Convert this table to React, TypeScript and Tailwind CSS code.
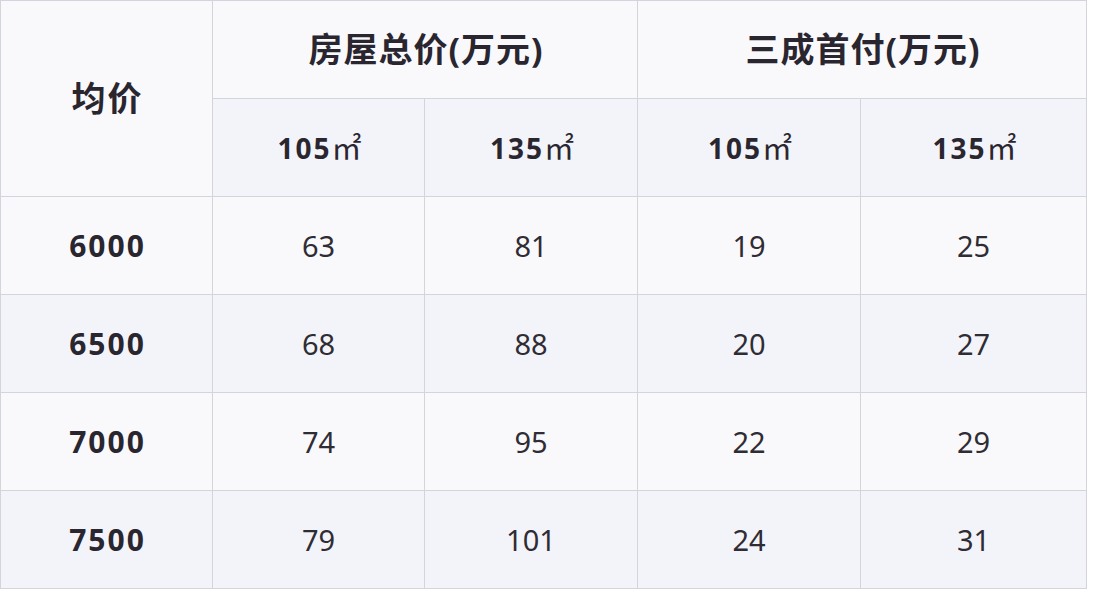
const data = [
  { price: '6000', values: ['63', '81', '19', '25'] },
  { price: '6500', values: ['68', '88', '20', '27'] },
  { price: '7000', values: ['74', '95', '22', '29'] },
  { price: '7500', values: ['79', '101', '24', '31'] },
];

const sizes = ['105', '135', '105', '135'];

const light = 'bg-[#f9f9fc]';
const tint = 'bg-[#f3f4fa]';

function Area({ n }: { n: string }) {
  return (
    <span className="flex items-center pl-[2px] text-[28px] font-bold tracking-[2px]">
      {n}
      <span className="text-[30px] font-normal tracking-normal">㎡</span>
    </span>
  );
}

export default function App() {
  return (
    <div
      className="w-[1096px] h-[592px] bg-white text-[#2a2630]"
      style={{ fontFamily: '"Noto Sans", "Noto Sans CJK SC", sans-serif' }}
    >
      <div className="inline-grid grid-cols-[211px_211px_212px_222px_225px] grid-rows-[repeat(6,97px)] gap-px p-px bg-[#d4d4dc]">
        <div className={`${light} row-span-2 flex items-center justify-center pl-[2px] text-[34px] font-bold tracking-[2px]`}>
          均价
        </div>
        <div className={`${light} col-span-2 flex items-center justify-center pl-[2px] text-[34px] font-bold tracking-[1px]`}>
          房屋总价(万元)
        </div>
        <div className={`${light} col-span-2 flex items-center justify-center pl-[2px] text-[34px] font-bold tracking-[1px]`}>
          三成首付(万元)
        </div>
        {sizes.map((s, i) => (
          <div key={i} className={`${tint} flex items-center justify-center`}>
            <Area n={s} />
          </div>
        ))}
        {data.map((row, r) => {
          const bg = r % 2 === 0 ? light : tint;
          return [
            <div key={`p${r}`} className={`${bg} flex items-center justify-center pl-[2px] text-[30px] font-bold tracking-[2px]`}>
              {row.price}
            </div>,
            ...row.values.map((v, c) => (
              <div key={`${r}-${c}`} className={`${bg} flex items-center justify-center text-[29px] text-[#302c34]`}>
                {v}
              </div>
            )),
          ];
        })}
      </div>
    </div>
  );
}
